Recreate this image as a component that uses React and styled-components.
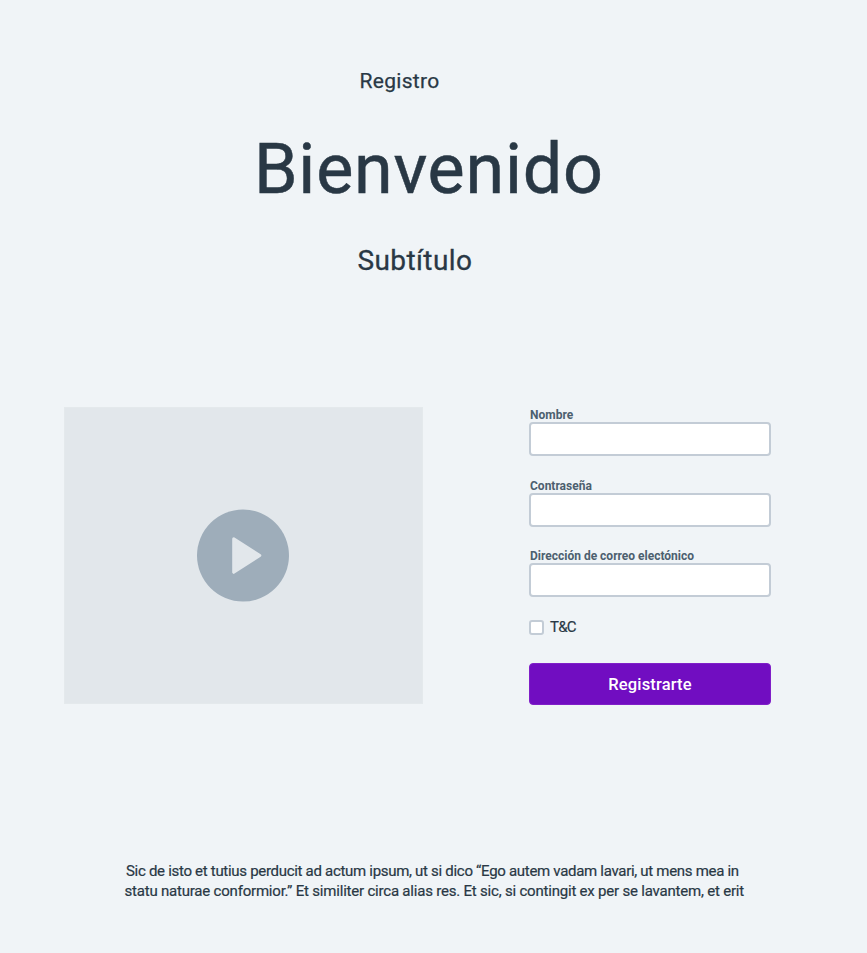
import React from "react";
import styled, { createGlobalStyle } from "styled-components";

const Global = createGlobalStyle`
  * { box-sizing: border-box; }
  body { margin: 0; background: #f0f4f7; }
`;

const Page = styled.div`
  width: 867px;
  height: 953px;
  overflow: hidden;
  display: flex;
  flex-direction: column;
  background: #f0f4f7;
  color: #293845;
  font-family: Roboto, "Liberation Sans", sans-serif;
`;

const Header = styled.header`
  height: 407px;
  padding-top: 66px;
  display: flex;
  flex-direction: column;
  align-items: flex-start;
  white-space: nowrap;
`;

const Eyebrow = styled.div`
  margin: 0 0 31px 359.5px;
  font-size: 21px;
  line-height: 30px;
  letter-spacing: 0.3px;
  -webkit-text-stroke: 0.25px currentColor;
`;

const Title = styled.h1`
  margin: 0 0 32px 254px;
  font-size: 70px;
  font-weight: 400;
  line-height: 84px;
  letter-spacing: 0.75px;
  -webkit-text-stroke: 0.5px currentColor;
`;

const Subtitle = styled.h2`
  margin: 0 0 0 357.5px;
  font-size: 28px;
  font-weight: 400;
  line-height: 36px;
  letter-spacing: 0.4px;
  -webkit-text-stroke: 0.3px currentColor;
`;

const Content = styled.main`
  display: flex;
  gap: 106px;
  padding-left: 64px;
`;

const Video = styled.div`
  width: 359px;
  height: 297px;
  padding-right: 1px;
  display: flex;
  align-items: center;
  justify-content: center;
  background: #e2e7eb;
  border: 1px solid #e4e9ec;
`;

const PlayIcon = styled.svg`
  width: 92px;
  height: 93px;
`;

const Form = styled.form`
  width: 242px;
  display: flex;
  flex-direction: column;
`;

const Field = styled.label`
  display: flex;
  flex-direction: column;
  margin-bottom: ${(p) => p.$gap}px;
`;

const Label = styled.span`
  height: 15px;
  padding-left: 1px;
  font-size: 12px;
  font-weight: 700;
  line-height: 17px;
  color: #4c5f6f;
  white-space: nowrap;
`;

const Input = styled.input`
  width: 242px;
  height: 34px;
  padding: 0 10px;
  border: 2px solid #c3ccd6;
  border-radius: 4px;
  background: #fff;
  font: inherit;
  outline: none;
`;

const Terms = styled.label`
  height: 21px;
  margin-bottom: 25px;
  display: flex;
  align-items: center;
  gap: 6px;
  font-size: 15px;
  line-height: 21px;
  letter-spacing: -0.8px;
  -webkit-text-stroke: 0.2px currentColor;
`;

const Checkbox = styled.input`
  appearance: none;
  width: 15px;
  height: 15px;
  margin: 0;
  border: 2px solid #c3ccd6;
  border-radius: 3px;
  background: #fff;
`;

const Submit = styled.button`
  width: 242px;
  height: 42px;
  padding: 0;
  border: 1px solid #801fc8;
  border-radius: 4px;
  background: #710dc1;
  color: #fff;
  font-family: inherit;
  font-size: 16.5px;
  font-weight: 500;
  letter-spacing: 0.15px;
`;

const Footer = styled.footer`
  margin-top: 156px;
  display: flex;
  flex-direction: column;
  align-items: flex-start;
  font-size: 15px;
  line-height: 20px;
  white-space: nowrap;
  -webkit-text-stroke: 0.2px currentColor;
`;

const Line = styled.span`
  margin-left: ${(p) => p.$indent}px;
  letter-spacing: ${(p) => p.$tracking}px;
`;

export default function App() {
  return (
    <Page>
      <Global />
      <Header>
        <Eyebrow>Registro</Eyebrow>
        <Title>Bienvenido</Title>
        <Subtitle>Subtítulo</Subtitle>
      </Header>
      <Content>
        <Video>
          <PlayIcon viewBox="0 0 92 93">
            <circle cx="46" cy="46.5" r="46" fill="#9eadba" />
            <path
              d="M36.7 29.7 L62.8 46.5 L36.7 63.3 Z"
              fill="#e2e7eb"
              stroke="#e2e7eb"
              strokeWidth="3"
              strokeLinejoin="round"
            />
          </PlayIcon>
        </Video>
        <Form onSubmit={(e) => e.preventDefault()}>
          <Field $gap={22}>
            <Label>Nombre</Label>
            <Input type="text" />
          </Field>
          <Field $gap={21}>
            <Label>Contraseña</Label>
            <Input type="password" />
          </Field>
          <Field $gap={20}>
            <Label>Dirección de correo electónico</Label>
            <Input type="email" />
          </Field>
          <Terms>
            <Checkbox type="checkbox" />
            <span>T&amp;C</span>
          </Terms>
          <Submit type="submit">Registrarte</Submit>
        </Form>
      </Content>
      <Footer>
        <Line $indent={126} $tracking={-0.3}>
          Sic de isto et tutius perducit ad actum ipsum, ut si dico “Ego autem vadam lavari, ut mens mea in
        </Line>
        <Line $indent={124.5} $tracking={-0.205}>
          statu naturae conformior.” Et similiter circa alias res. Et sic, si contingit ex per se lavantem, et erit
        </Line>
      </Footer>
    </Page>
  );
}
